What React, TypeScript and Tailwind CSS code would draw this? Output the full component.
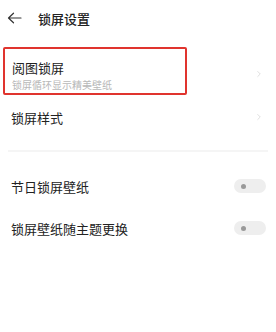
import { ChevronRight } from "lucide-react";

function Toggle() {
  return (
    <div className="w-[32px] h-[14px] rounded-full bg-[#eeeeee] flex items-center pl-[7px]">
      <div className="w-[5px] h-[5px] rounded-full bg-[#999999]" />
    </div>
  );
}

export default function App() {
  return (
    <div className="w-[276px] h-[332px] bg-white" style={{ fontFamily: '"Noto Sans CJK SC", "Noto Sans", sans-serif' }}>
      <div className="flex items-center h-[34px] pt-[2px]">
        <svg width="15" height="12" viewBox="0 0 15 12" className="ml-[7px]">
          <path d="M14 6H1.5M6.5 1.2L1.5 6l5 4.8" fill="none" stroke="#333" strokeWidth="1.2" strokeLinecap="round" strokeLinejoin="round" />
        </svg>
        <span className="ml-[16px] text-[13px] text-[#222] font-medium leading-none">锁屏设置</span>
      </div>

      <div className="mt-[13px] flex items-center">
        <div className="ml-[3px] w-[184px] h-[48px] border-2 border-[#e0342e] rounded-[2px] pl-[7px] pt-[12px]">
          <div className="text-[13px] text-[#222] leading-none">阅图锁屏</div>
          <div className="mt-[6px] text-[10px] text-[#b8b8b8] leading-none">锁屏循环显示精美壁纸</div>
        </div>
        <ChevronRight className="ml-auto mr-[12px] mt-[6px] w-[10px] h-[10px] text-[#cccccc]" strokeWidth={1.5} />
      </div>

      <div className="flex items-center h-[44px] pl-[11px] pr-[12px]">
        <span className="text-[13px] text-[#222] leading-none">锁屏样式</span>
        <ChevronRight className="ml-auto w-[10px] h-[10px] text-[#cccccc]" strokeWidth={1.5} />
      </div>

      <div className="mt-[11px] mx-[8px] h-[2px] bg-[#f5f5f5]" />

      <div className="mt-[16px] flex items-center h-[36px] pl-[11px] pr-[10px]">
        <span className="text-[13px] text-[#222] leading-none">节日锁屏壁纸</span>
        <div className="ml-auto"><Toggle /></div>
      </div>

      <div className="mt-[6px] flex items-center h-[36px] pl-[11px] pr-[10px]">
        <span className="text-[13px] text-[#222] leading-none">锁屏壁纸随主题更换</span>
        <div className="ml-auto"><Toggle /></div>
      </div>
    </div>
  );
}
